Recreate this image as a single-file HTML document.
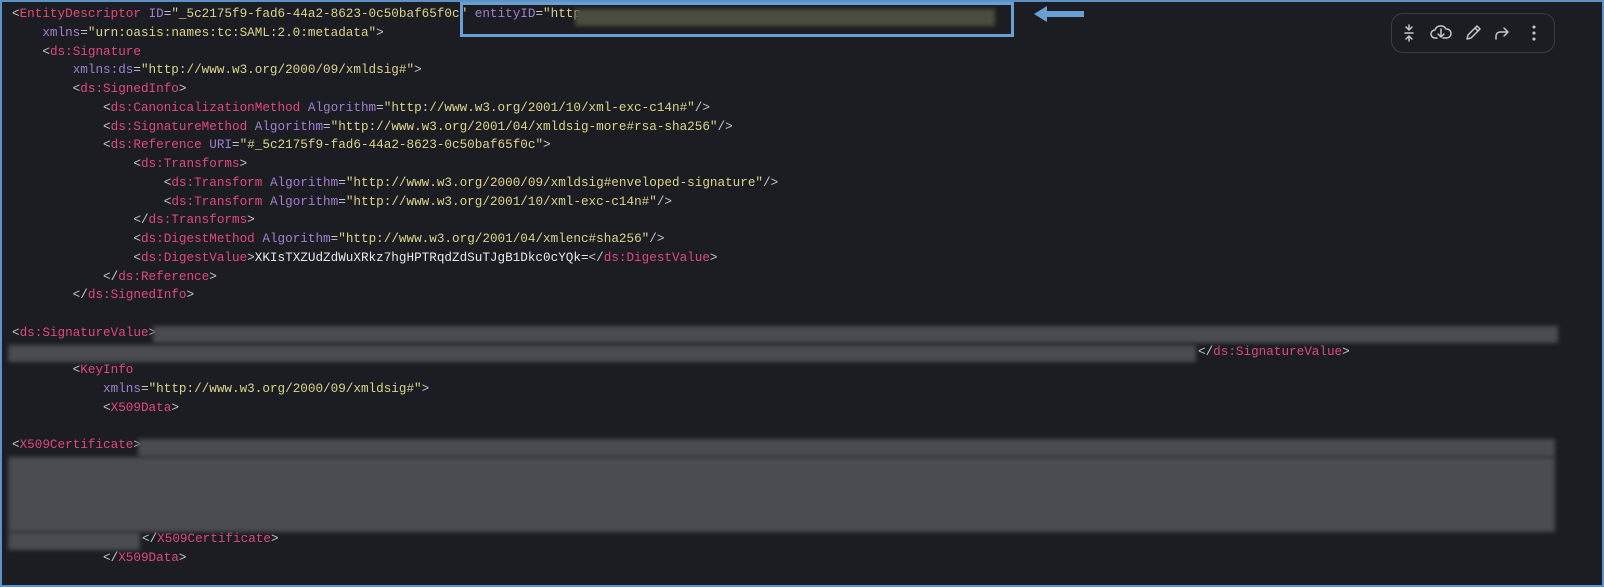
<!DOCTYPE html>
<html><head><meta charset="utf-8"><style>
html,body{margin:0;padding:0;}
body{width:1604px;height:587px;background:#1b1d22;position:relative;overflow:hidden;}
.frame{position:absolute;left:0;top:0;width:1600px;height:583px;border:2px solid #5b93c9;}
pre{position:absolute;left:12px;top:5px;margin:0;font-family:"Liberation Mono",monospace;font-size:12.65px;line-height:18.75px;color:#c5c7cc;}
.t{color:#e2487e}.a{color:#a27fcf}.s{color:#dcd48c}
.blur{position:absolute;background:#4a4c51;filter:blur(2px);}
.box{position:absolute;left:460px;top:2px;width:548px;height:29px;border:3px solid #6a9fd4;}
.tb{position:absolute;left:1391px;top:13px;width:162px;height:38px;border:1px solid #3a3d42;border-radius:12px;}
</style></head><body>
<div class="frame"></div>
<pre>&lt;<span class="t">EntityDescriptor</span> <span class="a">ID</span>=<span class="s">"_5c2175f9-fad6-44a2-8623-0c50baf65f0c"</span> <span class="a">entityID</span>=<span class="s">"http</span>
    <span class="a">xmlns</span>=<span class="s">"urn:oasis:names:tc:SAML:2.0:metadata"</span>&gt;
    &lt;<span class="t">ds:Signature</span>
        <span class="a">xmlns:ds</span>=<span class="s">"http://www.w3.org/2000/09/xmldsig#"</span>&gt;
        &lt;<span class="t">ds:SignedInfo</span>&gt;
            &lt;<span class="t">ds:CanonicalizationMethod</span> <span class="a">Algorithm</span>=<span class="s">"http://www.w3.org/2001/10/xml-exc-c14n#"</span>/&gt;
            &lt;<span class="t">ds:SignatureMethod</span> <span class="a">Algorithm</span>=<span class="s">"http://www.w3.org/2001/04/xmldsig-more#rsa-sha256"</span>/&gt;
            &lt;<span class="t">ds:Reference</span> <span class="a">URI</span>=<span class="s">"#_5c2175f9-fad6-44a2-8623-0c50baf65f0c"</span>&gt;
                &lt;<span class="t">ds:Transforms</span>&gt;
                    &lt;<span class="t">ds:Transform</span> <span class="a">Algorithm</span>=<span class="s">"http://www.w3.org/2000/09/xmldsig#enveloped-signature"</span>/&gt;
                    &lt;<span class="t">ds:Transform</span> <span class="a">Algorithm</span>=<span class="s">"http://www.w3.org/2001/10/xml-exc-c14n#"</span>/&gt;
                &lt;/<span class="t">ds:Transforms</span>&gt;
                &lt;<span class="t">ds:DigestMethod</span> <span class="a">Algorithm</span>=<span class="s">"http://www.w3.org/2001/04/xmlenc#sha256"</span>/&gt;
                &lt;<span class="t">ds:DigestValue</span>&gt;<span style="color:#e8e8e8">XKIsTXZUdZdWuXRkz7hgHPTRqdZdSuTJgB1Dkc0cYQk=</span>&lt;/<span class="t">ds:DigestValue</span>&gt;
            &lt;/<span class="t">ds:Reference</span>&gt;
        &lt;/<span class="t">ds:SignedInfo</span>&gt;

&lt;<span class="t">ds:SignatureValue</span>&gt;

        &lt;<span class="t">KeyInfo</span>
            <span class="a">xmlns</span>=<span class="s">"http://www.w3.org/2000/09/xmldsig#"</span>&gt;
            &lt;<span class="t">X509Data</span>&gt;

&lt;<span class="t">X509Certificate</span>&gt;





            &lt;/<span class="t">X509Data</span>&gt;</pre>
<pre style="left:1198px;top:342.5px">&lt;/<span class="t">ds:SignatureValue</span>&gt;</pre>
<pre style="left:142px;top:530px">&lt;/<span class="t">X509Certificate</span>&gt;</pre>
<div class="blur" style="left:575px;top:9px;width:420px;height:17px;background:#4b4d3e"></div>
<div class="blur" style="left:153px;top:326px;width:1405px;height:17px"></div>
<div class="blur" style="left:8px;top:345px;width:1188px;height:17px"></div>
<div class="blur" style="left:138px;top:439px;width:1417px;height:18px"></div>
<div class="blur" style="left:8px;top:457px;width:1547px;height:75px"></div>
<div class="blur" style="left:8px;top:532px;width:132px;height:18px"></div>
<div class="box"></div>
<svg style="position:absolute;left:1030px;top:4px" width="56" height="20"><path d="M4 10 L17 2 L17 7 L54 7 L54 13 L17 13 L17 18 Z" fill="#6a9fd4"/></svg>
<div class="tb"></div>
<svg style="position:absolute;left:1391px;top:13px" width="164" height="40" fill="none" stroke="#c8c8c8" stroke-width="1.5" stroke-linecap="round" stroke-linejoin="round">
<path d="M18 12v5M15 14l3 3 3-3M18 28v-5M15 26l3-3 3 3M14 20h8"/>
<path d="M46 25h-2a4 4 0 0 1 0-8 6 6 0 0 1 11-1 4 4 0 0 1 1 9h-4M50 16v7M47 21l3 3 3-3"/>
<path d="M76 26l1-4 9-9 3 3-9 9zM84 15l3 3"/>
<path d="M105 26v-3a4 4 0 0 1 4-4h7M113 15l4 4-4 4"/>
<circle cx="143" cy="14" r="0.8" fill="#c8c8c8"/><circle cx="143" cy="20" r="0.8" fill="#c8c8c8"/><circle cx="143" cy="26" r="0.8" fill="#c8c8c8"/>
</svg>
</body></html>
